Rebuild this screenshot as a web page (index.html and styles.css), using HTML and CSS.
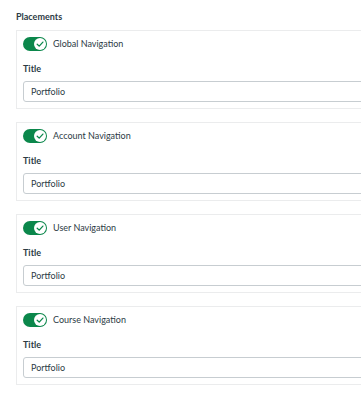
FILE: index.html
```html
<!DOCTYPE html>
<html lang="en">
<head>
  <meta charset="UTF-8">
  <meta name="viewport" content="width=device-width, initial-scale=1.0">
  <title>Placements</title>
  <link rel="stylesheet" href="styles.css">
</head>
<body>
  <div class="placements">
    <h2 class="heading">Placements</h2>

    <div class="card">
      <div class="toggle-row">
        <span class="toggle">
          <span class="knob">
            <svg viewBox="0 0 12 12" width="12" height="12"><path d="M3.2 6.2 L5.2 8.1 L8.9 4.1" fill="none" stroke="#0b874b" stroke-width="1.3" stroke-linecap="round" stroke-linejoin="round"/></svg>
          </span>
        </span>
        <span class="toggle-label">Global Navigation</span>
      </div>
      <label class="field-label">Title</label>
      <input class="field" type="text" value="Portfolio">
    </div>

    <div class="card">
      <div class="toggle-row">
        <span class="toggle">
          <span class="knob">
            <svg viewBox="0 0 12 12" width="12" height="12"><path d="M3.2 6.2 L5.2 8.1 L8.9 4.1" fill="none" stroke="#0b874b" stroke-width="1.3" stroke-linecap="round" stroke-linejoin="round"/></svg>
          </span>
        </span>
        <span class="toggle-label">Account Navigation</span>
      </div>
      <label class="field-label">Title</label>
      <input class="field" type="text" value="Portfolio">
    </div>

    <div class="card">
      <div class="toggle-row">
        <span class="toggle">
          <span class="knob">
            <svg viewBox="0 0 12 12" width="12" height="12"><path d="M3.2 6.2 L5.2 8.1 L8.9 4.1" fill="none" stroke="#0b874b" stroke-width="1.3" stroke-linecap="round" stroke-linejoin="round"/></svg>
          </span>
        </span>
        <span class="toggle-label">User Navigation</span>
      </div>
      <label class="field-label">Title</label>
      <input class="field" type="text" value="Portfolio">
    </div>

    <div class="card">
      <div class="toggle-row">
        <span class="toggle">
          <span class="knob">
            <svg viewBox="0 0 12 12" width="12" height="12"><path d="M3.2 6.2 L5.2 8.1 L8.9 4.1" fill="none" stroke="#0b874b" stroke-width="1.3" stroke-linecap="round" stroke-linejoin="round"/></svg>
          </span>
        </span>
        <span class="toggle-label">Course Navigation</span>
      </div>
      <label class="field-label">Title</label>
      <input class="field" type="text" value="Portfolio">
    </div>
  </div>
</body>
</html>
```

FILE: styles.css
```css
* {
  margin: 0;
  padding: 0;
  box-sizing: border-box;
}

body {
  font-family: 'Lato', 'Liberation Sans', sans-serif;
  background: #ffffff;
  color: #2d3b45;
  overflow: hidden;
}

.placements {
  width: 420px;
  padding: 11px 0 0 16px;
}

.heading {
  font-size: 9px;
  font-weight: 700;
  line-height: 12px;
  margin-bottom: 7px;
}

.card {
  border: 1px solid #ebeced;
  padding: 6px 0 6px 6px;
  margin-bottom: 13px;
  display: flex;
  flex-direction: column;
}

.toggle-row {
  display: flex;
  align-items: center;
  gap: 6px;
  height: 14px;
}

.toggle {
  width: 24px;
  height: 14px;
  border-radius: 7px;
  background: #0b874b;
  display: flex;
  align-items: center;
  justify-content: flex-end;
  padding-right: 1px;
}

.knob {
  width: 12px;
  height: 12px;
  border-radius: 50%;
  background: #ffffff;
  display: flex;
}

.toggle-label {
  font-size: 9px;
  line-height: 12px;
}

.field-label {
  font-size: 9px;
  font-weight: 700;
  line-height: 12px;
  margin-top: 12px;
  margin-bottom: 6px;
}

.field {
  height: 21px;
  border: 1px solid #c7cdd1;
  border-radius: 3px;
  padding: 0 7px;
  font-family: inherit;
  font-size: 9px;
  color: #2d3b45;
  background: #ffffff;
}
```
